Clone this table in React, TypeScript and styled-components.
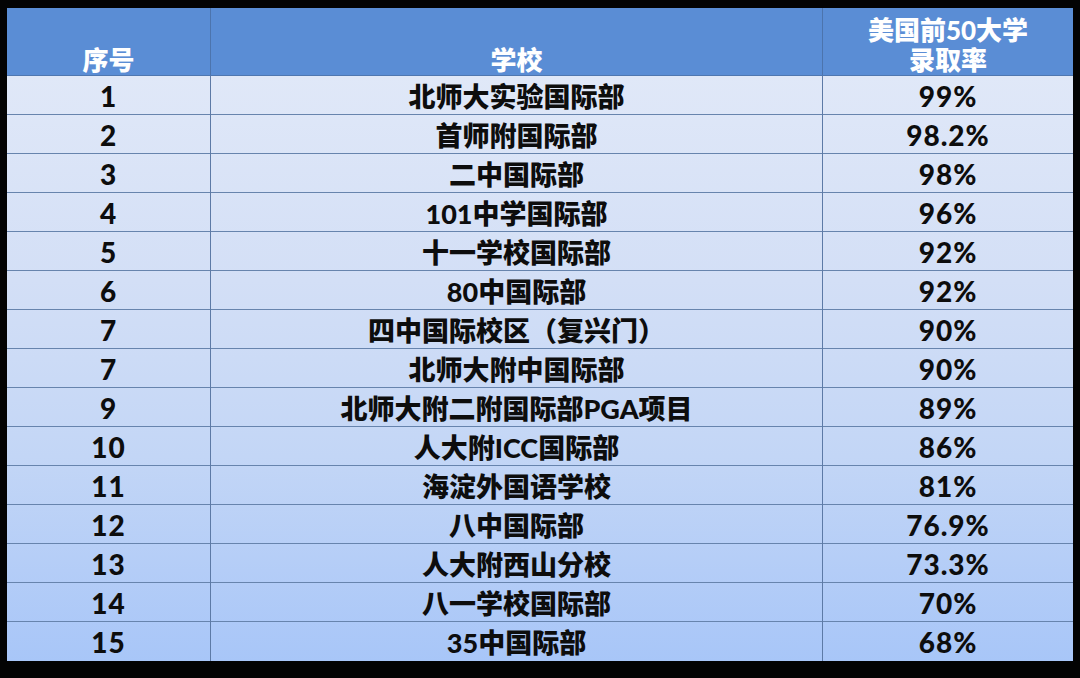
import React from 'react';
import styled, { createGlobalStyle } from 'styled-components';

const ROWS: [string, string, string][] = [
  ['1', '北师大实验国际部', '99%'],
  ['2', '首师附国际部', '98.2%'],
  ['3', '二中国际部', '98%'],
  ['4', '101中学国际部', '96%'],
  ['5', '十一学校国际部', '92%'],
  ['6', '80中国际部', '92%'],
  ['7', '四中国际校区（复兴门）', '90%'],
  ['7', '北师大附中国际部', '90%'],
  ['9', '北师大附二附国际部PGA项目', '89%'],
  ['10', '人大附ICC国际部', '86%'],
  ['11', '海淀外国语学校', '81%'],
  ['12', '八中国际部', '76.9%'],
  ['13', '人大附西山分校', '73.3%'],
  ['14', '八一学校国际部', '70%'],
  ['15', '35中国际部', '68%'],
];

const GlobalStyle = createGlobalStyle`
  html, body {
    margin: 0;
    padding: 0;
    background: #000;
  }
  body {
    font-family: Lato, 'Noto Sans CJK SC', sans-serif;
  }
`;

const Page = styled.div`
  width: 1080px;
  height: 678px;
  background: #030303;
  padding: 8px 7px 0 7px;
  box-sizing: border-box;
`;

const Table = styled.div`
  width: 1066px;
  display: flex;
  flex-direction: column;
`;

const COLS = '204px 612px 250px';

const HeadRow = styled.div`
  display: grid;
  grid-template-columns: ${COLS};
  height: 67px;
  background: #5a8dd5;
  border-bottom: 1px solid #4f77b0;
`;

const HeadCell = styled.div<{ $last?: boolean }>`
  display: flex;
  flex-direction: column;
  justify-content: flex-end;
  align-items: center;
  color: #ffffff;
  font-weight: 900;
  font-size: 26px;
  line-height: 30px;
  border-right: ${p => (p.$last ? 'none' : '1px solid #4c74ad')};
`;

const Body = styled.div`
  background: linear-gradient(180deg, #e0e8f8 0%, #d3dff6 35%, #c3d6f6 65%, #a8c6f8 100%);
  display: flex;
  flex-direction: column;
`;

const Row = styled.div<{ $last?: boolean }>`
  display: grid;
  grid-template-columns: ${COLS};
  height: 39px;
  box-sizing: border-box;
  border-bottom: ${p => (p.$last ? 'none' : '1.5px solid #6784ad')};
`;

const Cell = styled.div<{ $last?: boolean; $num?: boolean }>`
  display: flex;
  align-items: center;
  justify-content: center;
  color: #0d0d0d;
  font-weight: 900;
  font-size: ${p => (p.$num ? '28px' : '27px')};
  letter-spacing: ${p => (p.$num ? '1px' : '0')};
  border-right: ${p => (p.$last ? 'none' : '1.5px solid #5d7aa6')};
`;

export default function App() {
  return (
    <Page>
      <GlobalStyle />
      <Table>
        <HeadRow>
          <HeadCell>序号</HeadCell>
          <HeadCell>学校</HeadCell>
          <HeadCell $last>
            <span>美国前50大学</span>
            <span>录取率</span>
          </HeadCell>
        </HeadRow>
        <Body>
          {ROWS.map((r, i) => (
            <Row key={i} $last={i === ROWS.length - 1}>
              <Cell $num>{r[0]}</Cell>
              <Cell>{r[1]}</Cell>
              <Cell $last $num>
                {r[2]}
              </Cell>
            </Row>
          ))}
        </Body>
      </Table>
    </Page>
  );
}
